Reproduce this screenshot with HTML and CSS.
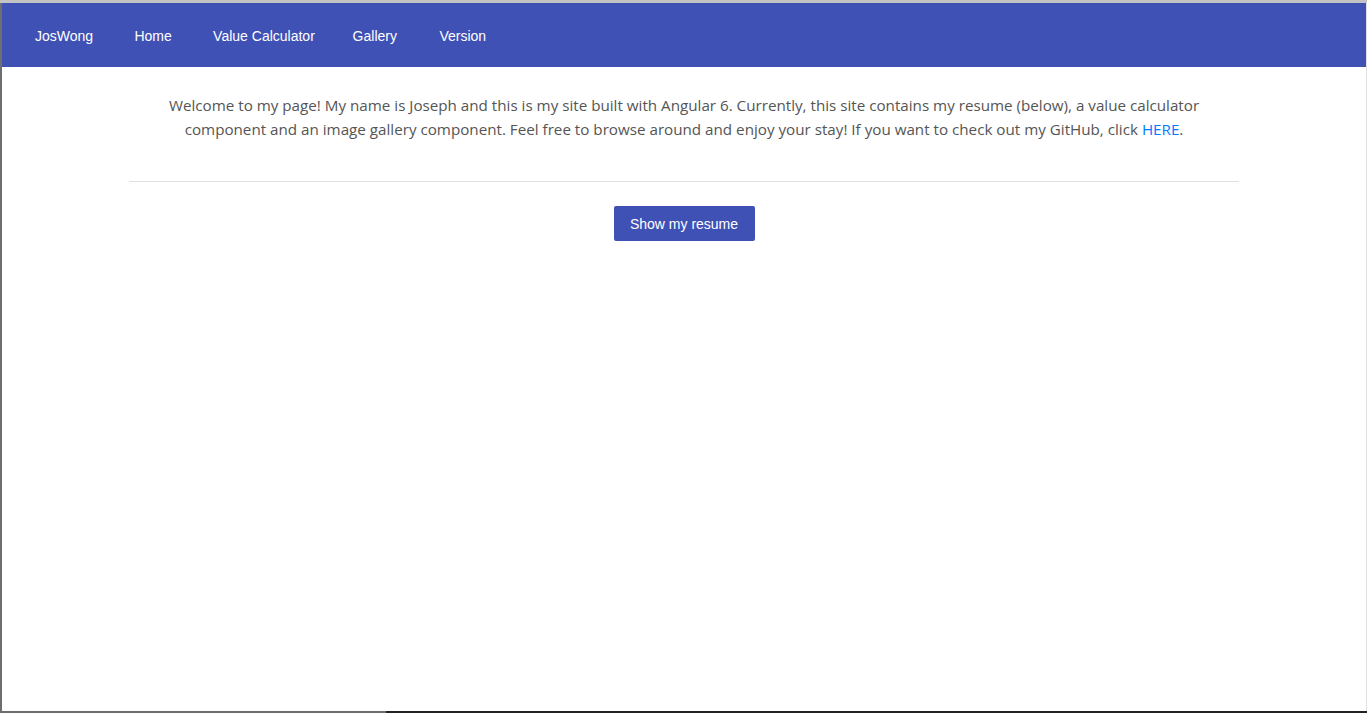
FILE: index.html
```html
<!DOCTYPE html>
<html lang="en">
<head>
<meta charset="utf-8">
<title>JosWong</title>
<link rel="stylesheet" href="styles.css">
</head>
<body>
<div class="frame">
  <div class="window">
    <nav class="toolbar">
      <a class="nav-item brand">JosWong</a>
      <a class="nav-item">Home</a>
      <a class="nav-item">Value Calculator</a>
      <a class="nav-item">Gallery</a>
      <a class="nav-item">Version</a>
    </nav>
    <main class="container">
      <p class="intro">Welcome to my page! My name is Joseph and this is my site built with Angular 6. Currently, this site contains my resume (below), a value calculator component and an image gallery component. Feel free to browse around and enjoy your stay! If you want to check out my GitHub, click <a class="link">HERE</a>.</p>
      <hr class="divider">
      <div class="actions">
        <button class="btn">Show my resume</button>
      </div>
    </main>
  </div>
  <div class="bottom-bar"><span class="bar-a"></span><span class="bar-b"></span></div>
</div>
</body>
</html>
```

FILE: styles.css
```css
html, body {
  margin: 0;
  padding: 0;
  height: 100%;
  background: #ffffff;
}
.frame {
  display: flex;
  flex-direction: column;
  height: 713px;
  border-top: 3px solid #c3c3c3;
  box-sizing: border-box;
}
.window {
  flex: 1;
  display: flex;
  flex-direction: column;
  border-left: 2px solid #6e6e6e;
  border-right: 1px solid #e2e2e2;
  background: #ffffff;
}
.toolbar {
  display: flex;
  align-items: center;
  height: 64px;
  background: #3f51b5;
  padding-left: 17px;
}
.nav-item {
  font-family: "Liberation Sans", Arial, sans-serif;
  font-size: 14px;
  line-height: 36px;
  color: #ffffff;
  min-width: 88px;
  padding: 2px 16px 0;
  box-sizing: border-box;
  text-align: center;
  text-decoration: none;
}
.container {
  width: 1110px;
  margin: 0 auto;
}
.intro {
  font-family: "Open Sans", "Noto Sans", sans-serif;
  font-size: 15.2px;
  line-height: 24px;
  color: #555555;
  text-align: center;
  margin: 26px 0 0;
  padding: 0 20px;
}
.link {
  color: #007bff;
}
.divider {
  border: 0;
  border-top: 1px solid #e0e0e0;
  margin: 40px 0 0;
}
.actions {
  display: flex;
  justify-content: center;
  padding-top: 24px;
}
.btn {
  font-family: "Liberation Sans", Arial, sans-serif;
  font-size: 14px;
  color: #ffffff;
  background: #3f51b5;
  border: 0;
  border-radius: 2px;
  width: 141px;
  height: 35px;
  padding: 0;
}
.bottom-bar {
  display: flex;
  height: 2px;
}
.bar-a {
  width: 386px;
  background: #6e6e6e;
}
.bar-b {
  flex: 1;
  background: #222222;
}
```
